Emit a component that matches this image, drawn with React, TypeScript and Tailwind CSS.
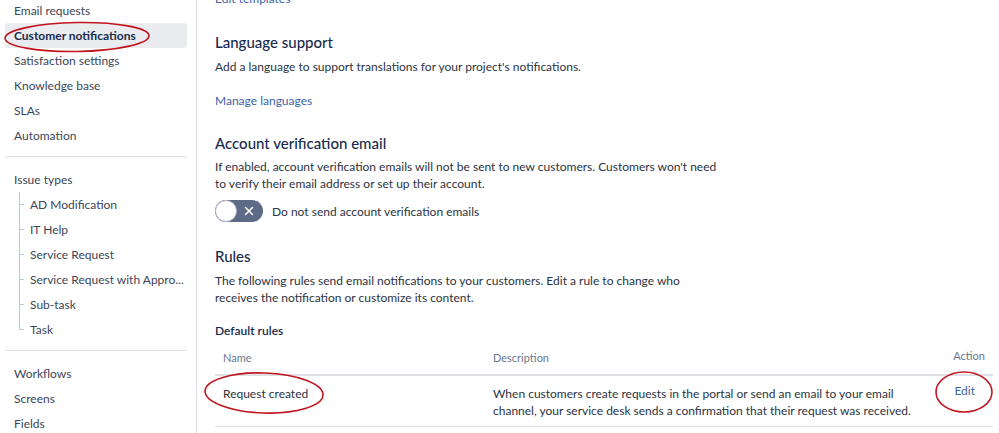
import { X } from 'lucide-react';

const topItems = ['Email requests', 'Customer notifications', 'Satisfaction settings', 'Knowledge base', 'SLAs', 'Automation'];
const issueTypes = ['AD Modification', 'IT Help', 'Service Request', 'Service Request with Appro...', 'Sub-task', 'Task'];
const bottomItems = ['Workflows', 'Screens', 'Fields'];

function NavItem({ label, active }: { label: string; active?: boolean }) {
  return (
    <div
      className={`h-[25px] flex items-center pl-[9px] rounded-[3px] whitespace-nowrap ${
        active ? 'bg-[#ebecf0] font-bold text-[#172b4d]' : 'text-[#3b4658]'
      }`}
    >
      {label}
    </div>
  );
}

function Sidebar() {
  return (
    <aside className="w-[197px] shrink-0 border-r border-[#dfe1e6] pl-[5px] pr-[9px]">
      <div className="mt-[-2px]">
        {topItems.map((item) => (
          <NavItem key={item} label={item} active={item === 'Customer notifications'} />
        ))}
      </div>
      <div className="mt-[8px] mb-[10px] border-t border-[#dfe1e6]" />
      <NavItem label="Issue types" />
      <div className="relative">
        {/* tree line */}
        <div className="absolute left-[14px] top-0 h-[138px] w-px bg-[#c1c7d0]" />
        {issueTypes.map((item) => (
          <div key={item} className="relative h-[25px] flex items-center pl-[25px] text-[#3b4658] whitespace-nowrap">
            <span className="absolute left-[14px] top-[12px] w-[5px] h-px bg-[#c1c7d0]" />
            {item}
          </div>
        ))}
      </div>
      <div className="mt-[8px] mb-[10px] border-t border-[#dfe1e6]" />
      {bottomItems.map((item) => (
        <NavItem key={item} label={item} />
      ))}
    </aside>
  );
}

function Toggle() {
  return (
    <div className="w-[48px] h-[22px] rounded-full bg-[#5e6b86] flex items-center justify-between">
      <div className="w-[22px] h-[22px] rounded-full bg-white border border-[#b3b9c4]" />
      <X size={14} strokeWidth={2.5} className="text-white mr-[7px]" />
    </div>
  );
}

export default function App() {
  return (
    <div
      className="relative w-[999px] h-[433px] overflow-hidden bg-white text-[12px] leading-[17px] text-[#2c3341] flex"
      style={{ fontFamily: 'Lato, "Open Sans", sans-serif' }}
    >
      <Sidebar />

      <main className="flex-1 pl-[18px] pr-[6px]">
        <a className="block mt-[-10px] text-[#3b63a8]">Edit templates</a>

        <h2 className="mt-[25px] text-[15px] leading-[20px] font-medium text-[#172b4d]">Language support</h2>
        <p className="mt-[6px]">Add a language to support translations for your project's notifications.</p>
        <a className="block mt-[17px] text-[#3b63a8]">Manage languages</a>

        <h2 className="mt-[24px] text-[15px] leading-[20px] font-medium text-[#172b4d]">Account verification email</h2>
        <p className="mt-[5px] w-[510px]">
          If enabled, account verification emails will not be sent to new customers. Customers won't need to verify
          their email address or set up their account.
        </p>
        <div className="mt-[8px] flex items-center gap-[9px]">
          <Toggle />
          <span>Do not send account verification emails</span>
        </div>

        <h2 className="mt-[24px] text-[15px] leading-[20px] font-medium text-[#172b4d]">Rules</h2>
        <p className="mt-[6px] w-[510px]">
          The following rules send email notifications to your customers. Edit a rule to change who receives the
          notification or customize its content.
        </p>
        <h3 className="mt-[16px] font-semibold text-[#172b4d]">Default rules</h3>

        <table className="w-full border-collapse">
          <thead>
            <tr className="border-b-2 border-[#dfe1e6] text-[#6b778c] text-[11px]">
              <th className="w-[270px] text-left font-normal pl-[8px] pt-[10px] pb-[8px]">Name</th>
              <th className="text-left font-normal pl-[8px] pt-[10px] pb-[8px]">Description</th>
              <th className="w-[80px] text-right font-normal pr-[8px] pt-[8px] pb-[10px]">Action</th>
            </tr>
          </thead>
          <tbody>
            <tr className="border-b border-[#dfe1e6] align-top">
              <td className="pl-[8px] pt-[9px] pb-[7px]">Request created</td>
              <td className="pl-[8px] pt-[9px] pb-[7px]">
                When customers create requests in the portal or send an email to your email channel, your service desk
                sends a confirmation that their request was received.
              </td>
              <td className="text-right pr-[18px] pt-[6px]">
                <a className="text-[#3b63a8]">Edit</a>
              </td>
            </tr>
          </tbody>
        </table>
      </main>

      {/* hand-drawn highlight annotations */}
      <svg className="absolute inset-0 pointer-events-none" width="999" height="433">
        <ellipse cx="77" cy="37" rx="72" ry="14.5" fill="none" stroke="#c0141f" strokeWidth="1.6" transform="rotate(-1 77 37)" />
        <ellipse cx="264" cy="393" rx="59" ry="20" fill="none" stroke="#c0141f" strokeWidth="1.6" transform="rotate(2 264 393)" />
        <ellipse cx="964" cy="392" rx="28" ry="20" fill="none" stroke="#c0141f" strokeWidth="1.6" />
      </svg>
    </div>
  );
}
